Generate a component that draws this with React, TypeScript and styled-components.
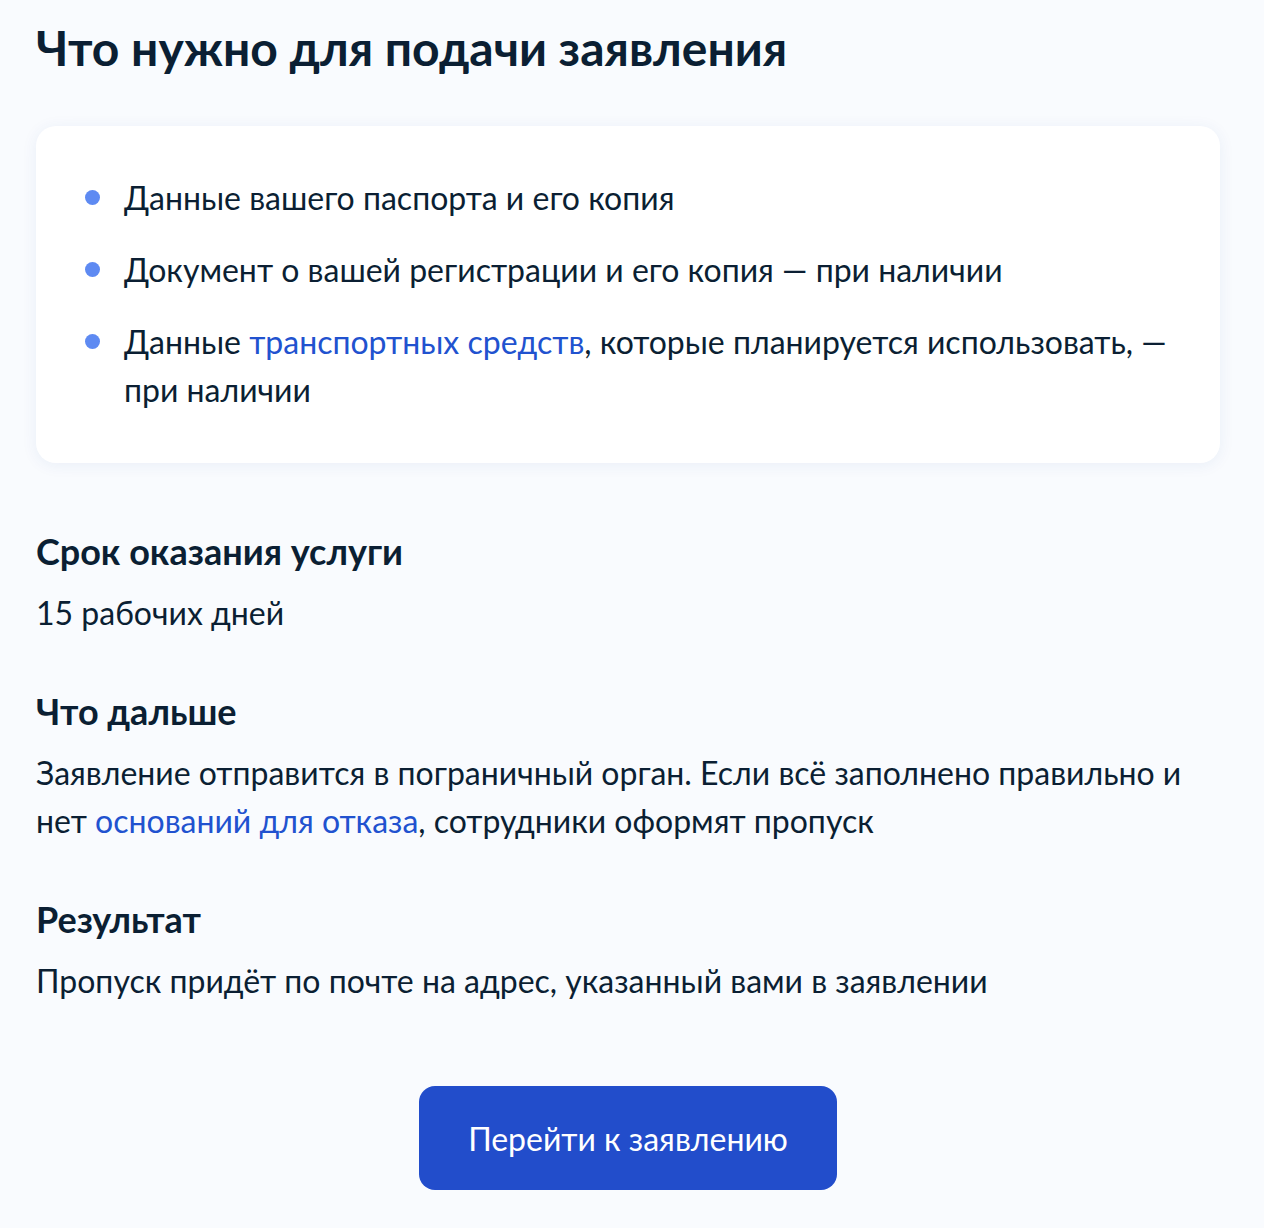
import React from "react";
import styled, { createGlobalStyle } from "styled-components";

const GlobalStyle = createGlobalStyle`
  html, body {
    margin: 0;
    padding: 0;
    background: #f9fbfe;
  }
  body {
    font-family: Lato, "Noto Sans", "Liberation Sans", sans-serif;
    color: #0b1f33;
    -webkit-font-smoothing: antialiased;
  }
`;

const Page = styled.main`
  width: 1184px;
  margin-left: 36px;
  padding: 20px 0 38px;
  display: flex;
  flex-direction: column;
`;

const Title = styled.h1`
  margin: 0;
  font-size: 48px;
  line-height: 56px;
  font-weight: 700;
  color: #0b1f33;
`;

const Card = styled.section`
  margin-top: 50px;
  background: #ffffff;
  border-radius: 20px;
  box-shadow: 0 2px 16px rgba(30, 70, 160, 0.07);
  padding: 48px 48px 49px;
`;

const List = styled.ul`
  list-style: none;
  margin: 0;
  padding: 0;
  display: flex;
  flex-direction: column;
  gap: 24px;
`;

const Item = styled.li`
  position: relative;
  padding-left: 40px;
  font-size: 32px;
  line-height: 48px;
  &::before {
    content: "";
    position: absolute;
    left: 1px;
    top: 16px;
    width: 15px;
    height: 15px;
    border-radius: 50%;
    background: #5e8af2;
  }
`;

const Link = styled.a`
  color: #2152cf;
  text-decoration: none;
`;

const Sections = styled.div`
  margin-top: 66px;
  display: flex;
  flex-direction: column;
  gap: 52px;
`;

const Section = styled.section`
  display: flex;
  flex-direction: column;
  gap: 16px;
`;

const Heading = styled.h2`
  margin: 0;
  font-size: 36px;
  line-height: 44px;
  font-weight: 700;
`;

const Text = styled.p`
  margin: 0;
  font-size: 32px;
  line-height: 48px;
`;

const ButtonRow = styled.div`
  margin-top: 81px;
  display: flex;
  justify-content: center;
`;

const Button = styled.button`
  height: 104px;
  padding: 0 49px;
  border: none;
  border-radius: 16px;
  background: #224dcb;
  color: #ffffff;
  font-family: inherit;
  font-size: 32px;
  font-weight: 400;
  cursor: pointer;
`;

export default function App() {
  return (
    <>
      <GlobalStyle />
      <Page>
        <Title>Что нужно для подачи заявления</Title>
        <Card>
          <List>
            <Item>Данные вашего паспорта и его копия</Item>
            <Item>Документ о вашей регистрации и его копия — при наличии</Item>
            <Item>
              Данные <Link href="#">транспортных средств</Link>, которые планируется
              использовать, — при наличии
            </Item>
          </List>
        </Card>
        <Sections>
          <Section>
            <Heading>Срок оказания услуги</Heading>
            <Text>15 рабочих дней</Text>
          </Section>
          <Section>
            <Heading>Что дальше</Heading>
            <Text>
              Заявление отправится в пограничный орган. Если всё заполнено правильно и
              нет <Link href="#">оснований для отказа</Link>, сотрудники оформят пропуск
            </Text>
          </Section>
          <Section>
            <Heading>Результат</Heading>
            <Text>Пропуск придёт по почте на адрес, указанный вами в заявлении</Text>
          </Section>
        </Sections>
        <ButtonRow>
          <Button>Перейти к заявлению</Button>
        </ButtonRow>
      </Page>
    </>
  );
}
